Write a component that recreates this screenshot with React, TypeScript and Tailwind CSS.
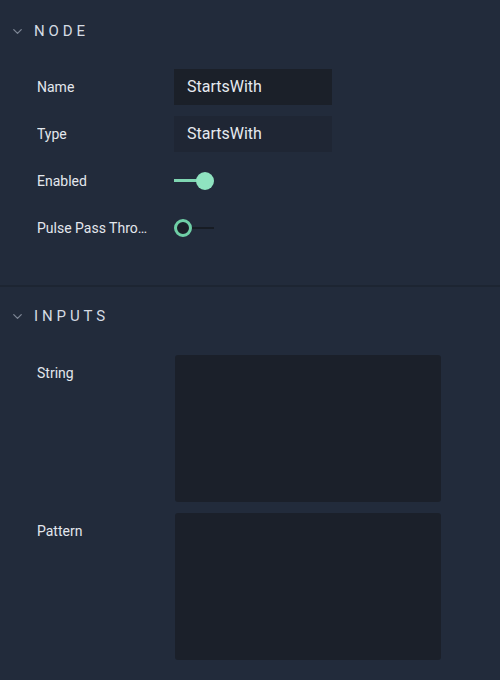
import { ChevronDown } from 'lucide-react';

function Toggle({ on }: { on: boolean }) {
  return (
    <div className="relative w-[40px] h-[18px]">
      {on ? (
        <>
          <div className="absolute left-0 top-[7px] w-[30px] h-[3px] bg-[#7fd6b2]" />
          <div className="absolute left-[22px] top-0 w-[18px] h-[18px] rounded-full bg-[#8fe3c0]" />
        </>
      ) : (
        <>
          <div className="absolute left-[10px] top-[8px] w-[30px] h-[2px] bg-[#171c24]" />
          <div className="absolute left-0 top-0 w-[18px] h-[18px] rounded-full border-[3px] border-[#6fcfa6] bg-[#1b2029]" />
        </>
      )}
    </div>
  );
}

function SectionHeader({ title }: { title: string }) {
  return (
    <div className="flex items-center h-[42px] pl-[10px] gap-[9px]">
      <ChevronDown className="w-[15px] h-[15px] text-[#7d8694]" strokeWidth={2} />
      <span className="text-[15px] tracking-[0.26em] text-[#d5dbe3] font-normal">{title}</span>
    </div>
  );
}

function Row({ label, children }: { label: string; children: React.ReactNode }) {
  return (
    <div className="flex items-center h-[36px]">
      <div className="ml-[37px] w-[117px] text-[14px] text-[#e3e7ed] whitespace-nowrap overflow-hidden text-ellipsis">{label}</div>
      <div className="flex-1 pl-[20px] flex items-center">{children}</div>
    </div>
  );
}

export default function App() {
  return (
    <div className="w-[500px] h-[680px] bg-[#222b3b] overflow-hidden" style={{ fontFamily: 'Roboto, "Liberation Sans", sans-serif' }}>
      {/* Node */}
      <div className="pt-[10px] pb-[39px]">
        <SectionHeader title="NODE" />
        <div className="mt-[17px] flex flex-col gap-[11px]">
          <Row label="Name">
            <div className="w-[158px] h-[36px] bg-[#1b2029] flex items-center px-[13px] text-[16px] text-[#e6eaf0]">StartsWith</div>
          </Row>
          <Row label="Type">
            <div className="w-[158px] h-[36px] bg-[#1f2634] flex items-center px-[13px] text-[16px] text-[#e6eaf0]">StartsWith</div>
          </Row>
          <Row label="Enabled">
            <Toggle on />
          </Row>
          <Row label="Pulse Pass Through">
            <Toggle on={false} />
          </Row>
        </div>
      </div>

      <div className="h-[2px] bg-[#1d2532]" />

      {/* Inputs */}
      <div className="pt-[8px]">
        <SectionHeader title="INPUTS" />
        <div className="mt-[18px] flex flex-col gap-[11px]">
          {['String', 'Pattern'].map((label) => (
            <div key={label} className="flex items-start">
              <div className="ml-[37px] w-[117px] h-[36px] flex items-center text-[14px] text-[#e3e7ed]">{label}</div>
              <div className="ml-[21px] w-[266px] h-[147px] rounded-[3px] bg-[#1b202a]" />
            </div>
          ))}
        </div>
      </div>
    </div>
  );
}
